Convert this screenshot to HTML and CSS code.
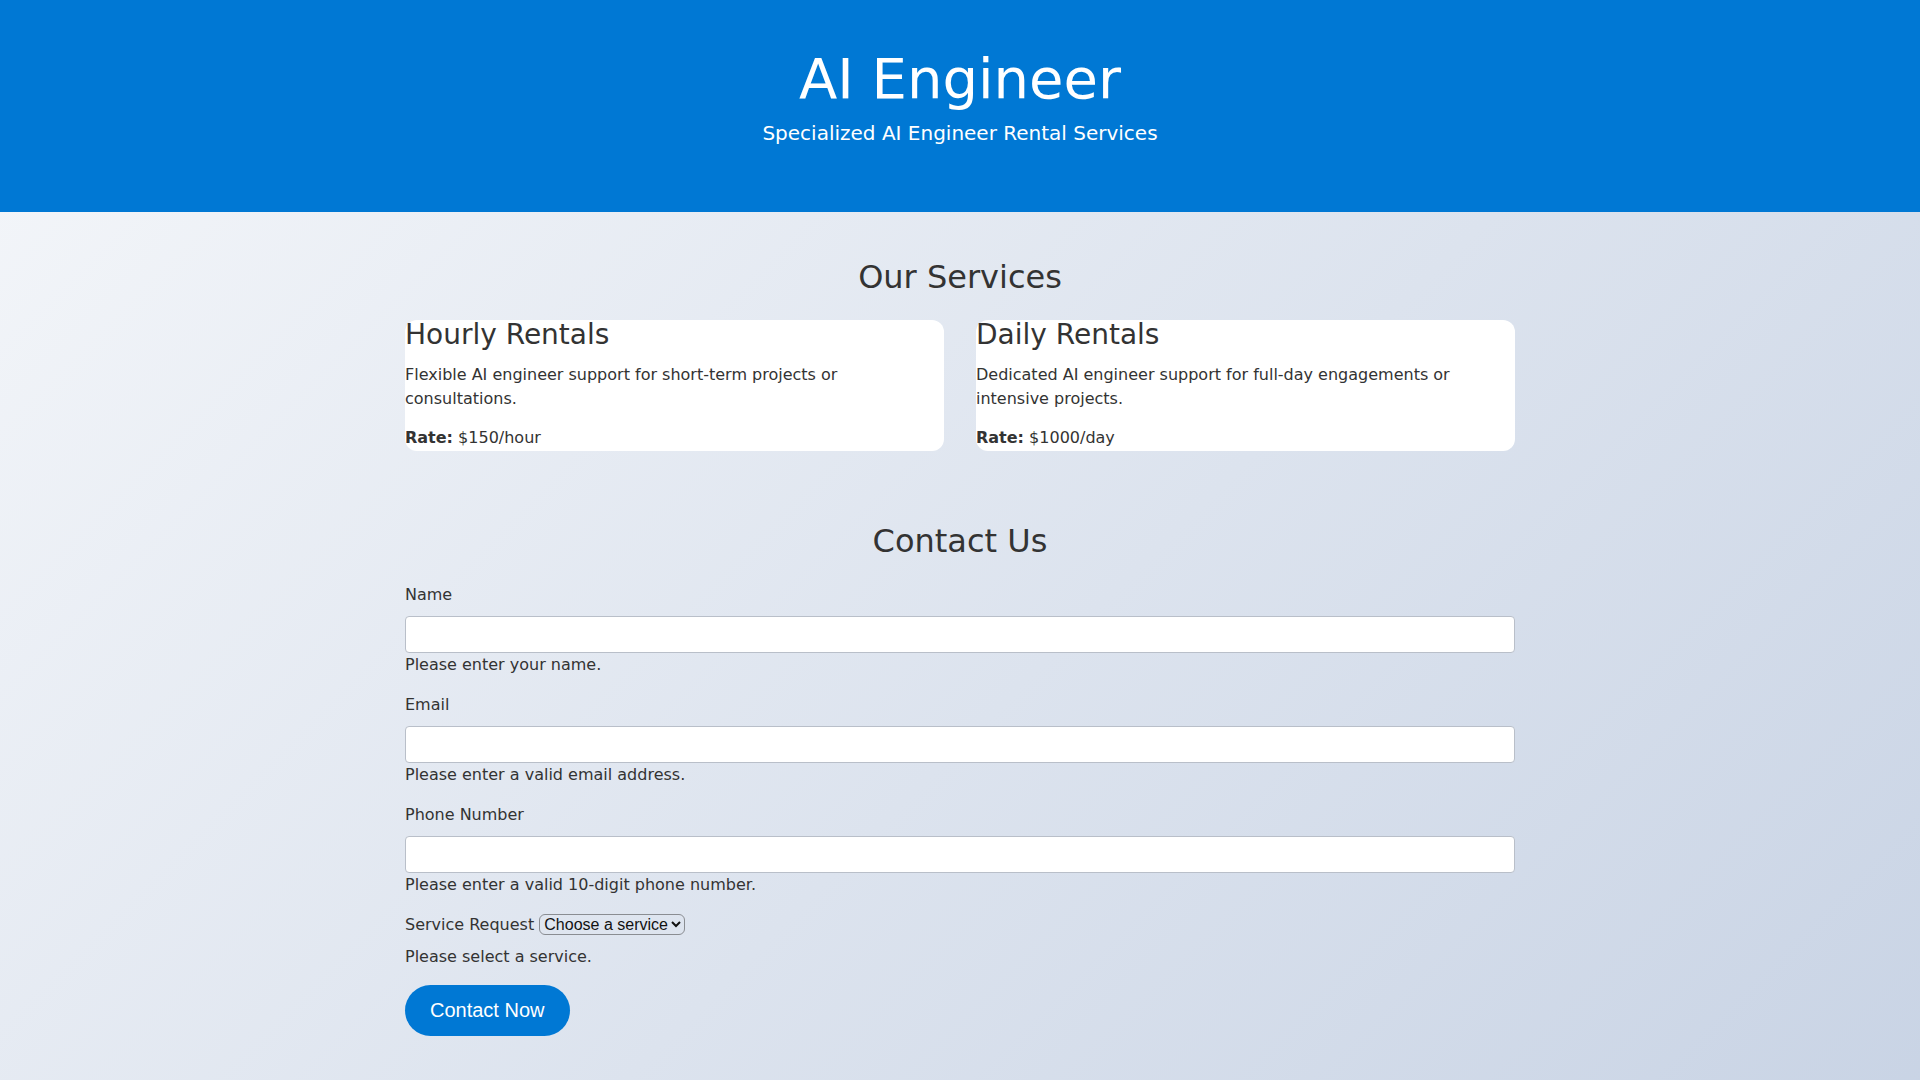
FILE: index.html
```html
<!DOCTYPE html>
<html lang="en">
<head>
<meta charset="utf-8">
<title>AI Engineer</title>
<link rel="stylesheet" href="styles.css">
</head>
<body>
<header class="site-header">
  <h1 class="site-title">AI Engineer</h1>
  <p class="site-tagline">Specialized AI Engineer Rental Services</p>
</header>
<main class="container">
  <section class="services">
    <h2 class="section-title">Our Services</h2>
    <div class="service-grid">
      <div class="card">
        <h3 class="card-title">Hourly Rentals</h3>
        <p class="card-text">Flexible AI engineer support for short-term projects or consultations.</p>
        <p class="card-rate"><strong>Rate:</strong> $150/hour</p>
      </div>
      <div class="card">
        <h3 class="card-title">Daily Rentals</h3>
        <p class="card-text">Dedicated AI engineer support for full-day engagements or intensive projects.</p>
        <p class="card-rate"><strong>Rate:</strong> $1000/day</p>
      </div>
    </div>
  </section>
  <section class="contact">
    <h2 class="section-title contact-title">Contact Us</h2>
    <form class="contact-form">
      <div class="form-group">
        <label class="field-label" for="name">Name</label>
        <input class="field-input" type="text" id="name">
        <div class="field-help">Please enter your name.</div>
      </div>
      <div class="form-group">
        <label class="field-label" for="email">Email</label>
        <input class="field-input" type="email" id="email">
        <div class="field-help">Please enter a valid email address.</div>
      </div>
      <div class="form-group">
        <label class="field-label" for="phone">Phone Number</label>
        <input class="field-input" type="tel" id="phone">
        <div class="field-help">Please enter a valid 10-digit phone number.</div>
      </div>
      <div class="form-group">
        <div class="select-row"><label for="service">Service Request</label> <select class="field-select" id="service"><option>Choose a service</option><option>Hourly Rentals</option><option>Daily Rentals</option></select></div>
        <div class="field-help">Please select a service.</div>
      </div>
      <button type="button" class="btn-primary">Contact Now</button>
    </form>
  </section>
</main>
</body>
</html>
```
FILE: styles.css
```css
html, body {
  margin: 0;
  padding: 0;
}
body {
  font-family: "DejaVu Sans", sans-serif;
  font-size: 16px;
  line-height: 24px;
  color: #333333;
  background: linear-gradient(135deg, #f5f7fa 0%, #c3cfe2 100%) no-repeat;
  background-size: 100% 1490px;
  background-color: #c3cfe2;
  min-height: 1080px;
}
.site-header {
  background: #0078d4;
  color: #ffffff;
  text-align: center;
  padding: 45px 0 64px;
}
.site-title {
  margin: 0;
  font-size: 56px;
  line-height: 67px;
  font-weight: normal;
}
.site-tagline {
  margin: 6px 0 0;
  font-size: 20px;
  line-height: 30px;
}
.container {
  width: 1110px;
  margin: 0 auto;
  padding-top: 46px;
}
.section-title {
  margin: 0 0 24px;
  font-size: 32px;
  line-height: 38px;
  font-weight: normal;
  text-align: center;
  color: #333333;
}
.service-grid {
  display: grid;
  grid-template-columns: 1fr 1fr;
  column-gap: 32px;
}
.card {
  background: #ffffff;
  border-radius: 12px;
  padding: 0 0 1px;
}
.card-title {
  margin: 0 0 13px;
  font-size: 28px;
  line-height: 30px;
  font-weight: normal;
}
.card-text {
  margin: 0 0 15px;
}
.card-rate {
  margin: 0;
}
.contact-title {
  margin-top: 71px;
  margin-bottom: 23px;
}
.form-group {
  margin-bottom: 16px;
}
.field-label {
  display: block;
  margin-bottom: 9px;
}
.field-input {
  display: block;
  box-sizing: border-box;
  width: 100%;
  height: 37px;
  margin: 0;
  border: 1px solid #b9bfc9;
  border-radius: 4px;
  background: #ffffff;
  font-size: 16px;
}
.select-row {
  margin-bottom: 8px;
}
.field-select {
  font-family: "Liberation Sans", Arial, sans-serif;
  font-size: 16px;
  color: #111111;
  background-color: transparent;
  border: 1px solid #8a8d92;
  border-radius: 6px;
  padding: 0;
  height: 21px;
}
.btn-primary {
  margin-top: 0;
  background: #0078d4;
  color: #ffffff;
  border: 0;
  border-radius: 26px;
  padding: 14px 25px;
  font-family: "Liberation Sans", Arial, sans-serif;
  font-size: 20px;
  line-height: 23px;
  cursor: pointer;
}
```
